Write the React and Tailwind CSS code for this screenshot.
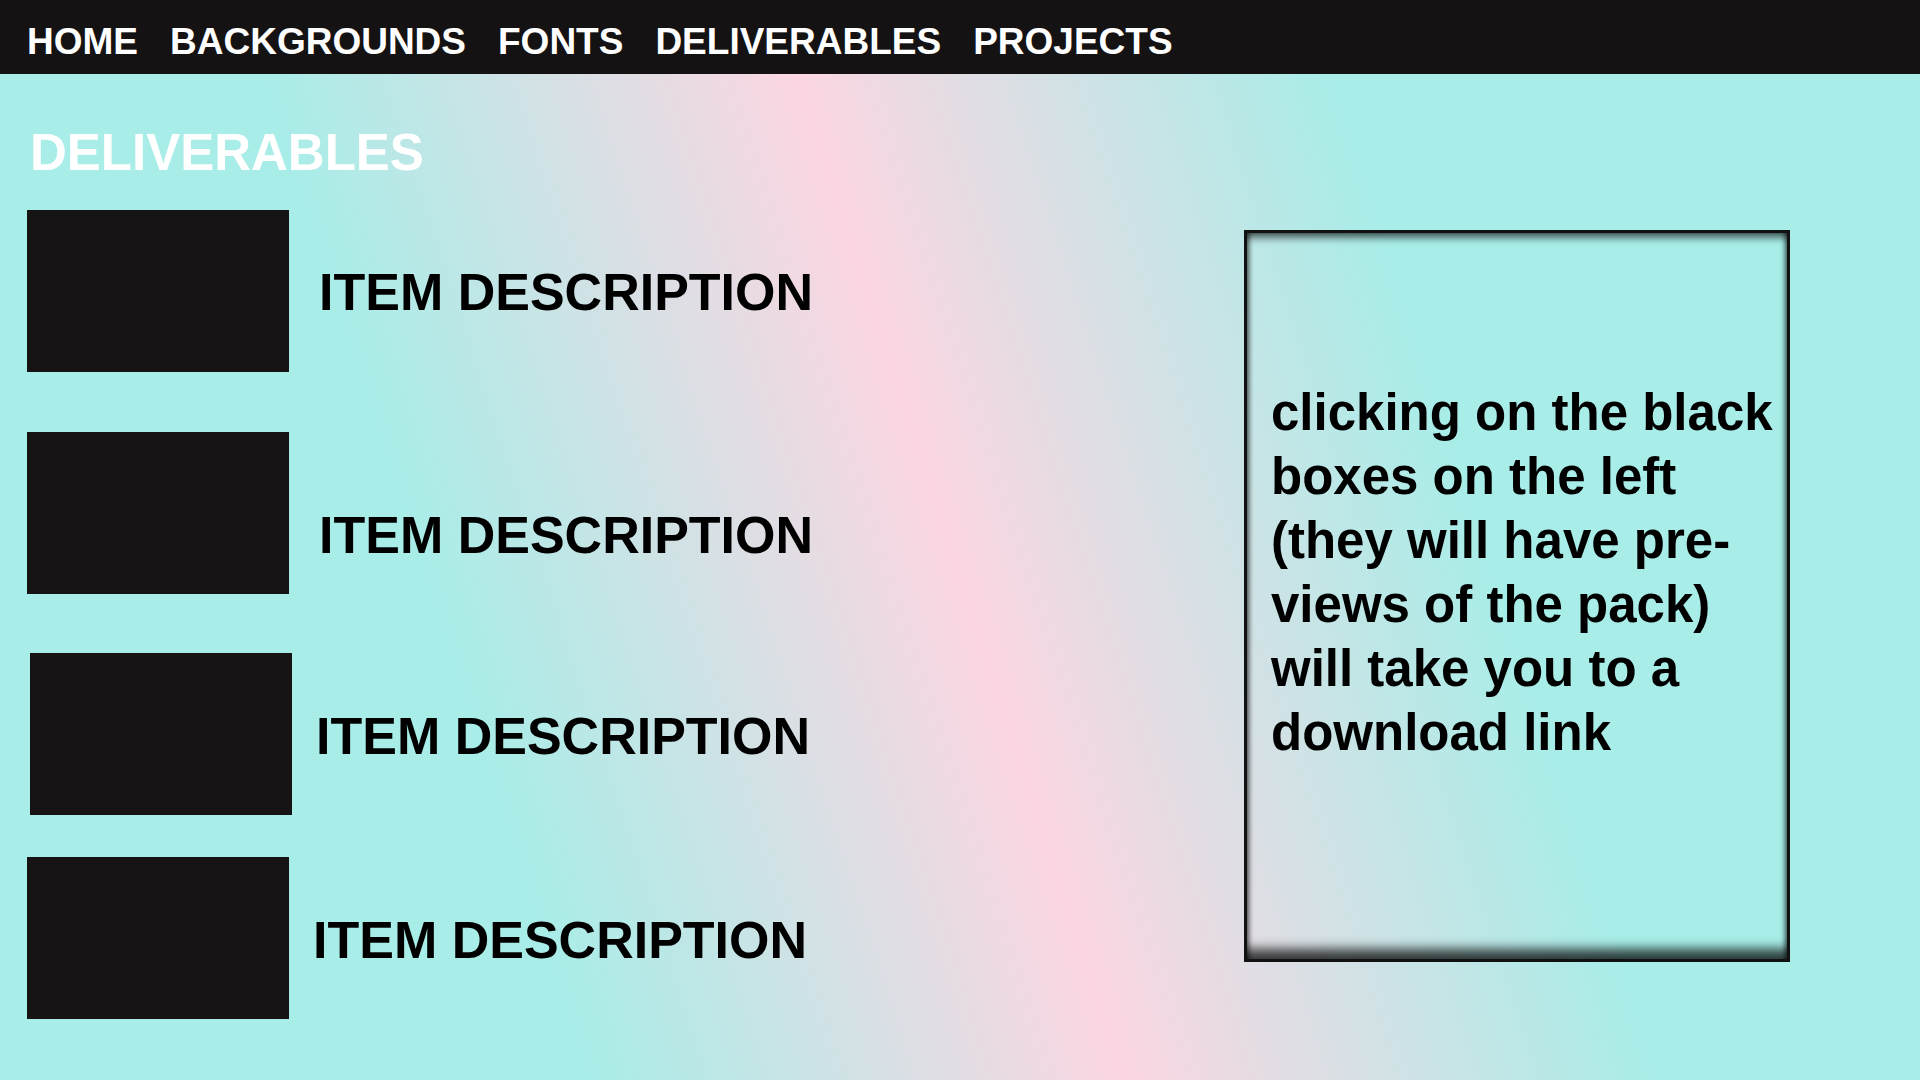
import React from "react";

const navItems = ["HOME", "BACKGROUNDS", "FONTS", "DELIVERABLES", "PROJECTS"];

// each row: top margin, text offset from box, tweaks seen in the mockup
const rows = [
  { mt: "mt-[32px]", box: "ml-0", text: "mt-[56px] ml-[30px]" },
  { mt: "mt-[60px]", box: "ml-0", text: "mt-[77px] ml-[30px]" },
  { mt: "mt-[59px]", box: "ml-[3px]", text: "mt-[57px] ml-[24px]" },
  { mt: "mt-[42px]", box: "ml-0", text: "mt-[57px] ml-[24px]" },
];

const lines = [
  "clicking on the black",
  "boxes on the left",
  "(they will have pre-",
  "views of the pack)",
  "will take you to a",
  "download link",
];

export default function App() {
  return (
    <div className="min-h-screen flex flex-col font-['Liberation_Sans',Arial,sans-serif]">
      {/* top nav */}
      <nav className="h-[74px] shrink-0 bg-[#141213] flex items-start gap-[32px] pl-[27px] pt-[23px] text-white text-[37px] font-bold leading-none">
        {navItems.map((item) => (
          <a key={item} href="#" className="whitespace-nowrap">
            {item}
          </a>
        ))}
      </nav>

      <main className="flex-1 flex bg-[linear-gradient(72deg,#a8ede8_26%,#fbd6e2_50%,#a8ede8_74%)]">
        {/* left column */}
        <div className="flex flex-col pl-[27px] shrink-0">
          <h1 className="mt-[53px] ml-[3px] text-white text-[51px] font-bold leading-none">DELIVERABLES</h1>

          {rows.map((row, i) => (
            <div key={i} className={`flex items-start ${row.mt}`}>
              <div className={`w-[262px] h-[162px] bg-[#151314] shrink-0 ${row.box}`} />
              <p className={`text-black text-[52px] font-bold leading-none whitespace-nowrap ${row.text}`}>
                ITEM DESCRIPTION
              </p>
            </div>
          ))}
        </div>

        {/* info panel */}
        <div className="ml-auto mr-[130px] mt-[156px] w-[546px] h-[732px] border-[3px] border-[#111] shadow-[inset_0_-18px_12px_-8px_rgba(0,0,0,0.75),inset_0_10px_8px_-6px_rgba(0,0,0,0.7),inset_6px_0_5px_-4px_rgba(0,0,0,0.6),inset_-6px_0_5px_-4px_rgba(0,0,0,0.6)] pl-[24px] pt-[148px]">
          <p className="text-black text-[51px] font-bold leading-[64px]">
            {lines.map((l) => (
              <span key={l} className="block whitespace-nowrap">
                {l}
              </span>
            ))}
          </p>
        </div>
      </main>
    </div>
  );
}
